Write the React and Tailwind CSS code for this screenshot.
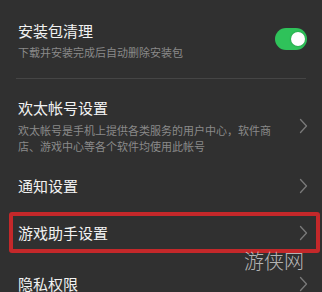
import React from 'react';

const Chevron = ({ className = '' }) => (
  <svg width="9" height="16" viewBox="0 0 9 16" className={className}>
    <polyline points="1.5,1.5 7.5,8 1.5,14.5" fill="none" stroke="#7a7a7a" strokeWidth="1.3" strokeLinecap="round" strokeLinejoin="round" />
  </svg>
);

const App = () => {
  return (
    <div className="relative w-[322px] h-[292px] overflow-hidden bg-[#303030] font-['Noto_Sans_CJK_SC','Noto_Sans',sans-serif]">
      {/* 安装包清理 */}
      <div className="h-[78px] pl-[18px] pr-[15px] pt-[21px] flex justify-between">
        <div>
          <p className="text-[15px] leading-[20px] text-[#f2f2f2]">安装包清理</p>
          <p className="mt-[4px] text-[11px] leading-[14px] text-[#8a8a8a]">下载并安装完成后自动删除安装包</p>
        </div>
        <div className="mt-[7px] w-[32px] h-[22px] rounded-full bg-[#2fc25a] flex items-center justify-end pr-[2px]">
          <div className="w-[14px] h-[14px] rounded-full bg-white shadow-[0_0_2px_rgba(0,0,0,0.3)]" />
        </div>
      </div>
      <div className="mx-4 h-px bg-[#454545]" />

      {/* 欢太帐号设置 */}
      <div className="pt-[19px] pl-[18px] pr-[14px] flex items-center justify-between">
        <div>
          <p className="text-[15px] leading-[20px] text-[#f2f2f2]">欢太帐号设置</p>
          <p className="mt-[4px] w-[260px] text-[11px] leading-[16px] text-[#8a8a8a]">
            欢太帐号是手机上提供各类服务的用户中心，软件商店、游戏中心等各个软件均使用此帐号
          </p>
        </div>
        <Chevron />
      </div>

      {/* 通知设置 */}
      <div className="pt-[22px] pl-[18px] pr-[14px] flex items-center justify-between">
        <p className="text-[15px] leading-[20px] text-[#f2f2f2]">通知设置</p>
        <Chevron />
      </div>

      {/* 游戏助手设置 */}
      <div className="mt-[16px] ml-[9px] w-[311px] h-[41px] border-[4px] border-[#c4282a] rounded-[3px] pl-[5px] pr-[8px] flex items-center justify-between">
        <p className="text-[15px] leading-[20px] text-[#f2f2f2]">游戏助手设置</p>
        <Chevron />
      </div>

      {/* 隐私权限 */}
      <div className="mt-[21px] pl-[18px] pr-[14px] flex items-center justify-between">
        <p className="text-[15px] leading-[20px] text-[#f2f2f2]">隐私权限</p>
        <Chevron />
      </div>

      {/* watermark */}
      <div className="absolute left-[244px] top-[247px] text-[20px] leading-[28px] font-light text-[#d8d8d8]/80 tracking-[0px]">
        游侠网
      </div>
    </div>
  );
};

export default App;
